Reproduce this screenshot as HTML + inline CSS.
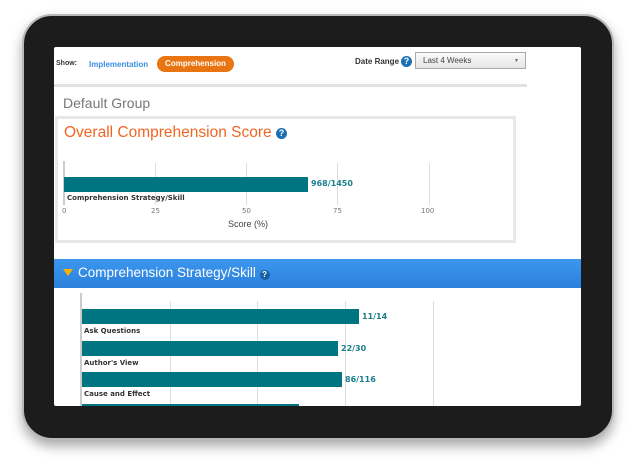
<!DOCTYPE html>
<html><head><style>
body{margin:0;width:642px;height:471px;background:#fff;position:relative;overflow:hidden;font-family:"Liberation Sans",sans-serif}
.a{position:absolute}
.frame{left:22px;top:14px;width:592px;height:426px;border-radius:30px;background:#1c1c1c;border:2px solid #b8b8b8;box-sizing:border-box;box-shadow:0 6px 12px rgba(0,0,0,.35)}
.screen{left:54px;top:47px;width:527px;height:359px;background:#fff;overflow:hidden;border-radius:2px}
.q{display:inline-block;width:11px;height:11px;border-radius:50%;background:#1a6fb0;color:#fff;font-size:9px;font-weight:bold;text-align:center;line-height:11px}
.g{background:#ddd;width:1px}
.bar{background:#007582}
.sm{font-size:7px;color:#333;font-weight:bold;font-family:"DejaVu Sans",sans-serif}
.val{font-size:8px;color:#1a7f8c;font-weight:bold;font-family:"DejaVu Sans",sans-serif}
.tk{font-size:7px;color:#777;font-family:"DejaVu Sans",sans-serif}
</style></head><body>
<div class="a frame"></div>
<div class="a screen">
 <div class="a" style="left:2px;top:13px;font-size:7px;font-weight:bold;color:#333">Show:</div>
 <div class="a" style="left:35px;top:13px;font-size:8px;font-weight:bold;color:#3a8fe0">Implementation</div>
 <div class="a" style="left:103px;top:9px;width:77px;height:16px;border-radius:8px;background:#e87511;color:#fff;font-size:8px;font-weight:bold;text-align:center;line-height:16px">Comprehension</div>
 <div class="a" style="left:301px;top:10px;font-size:8px;font-weight:bold;color:#333">Date Range</div>
 <div class="a q" style="left:347px;top:9px">?</div>
 <div class="a" style="left:361px;top:5px;width:111px;height:17px;border:1px solid #aaa;box-sizing:border-box;background:linear-gradient(#fafafa,#e6e6e6);font-size:8px;color:#444;padding:3px 0 0 7px">Last 4 Weeks<span style="position:absolute;right:6px;top:5px;font-size:5px;color:#666">▼</span></div>
 <div class="a" style="left:0;top:37px;width:473px;height:3px;background:#e2e2e2"></div>
 <div class="a" style="left:9px;top:48px;font-size:14px;color:#777">Default Group</div>
 <div class="a" style="left:1px;top:69px;width:461px;height:127px;border:3px solid #e8e8e8;box-sizing:border-box"></div>
 <div class="a" style="left:10px;top:77px;font-size:15.5px;color:#f26522">Overall Comprehension Score <span class="q" style="vertical-align:1px">?</span></div>
 <div class="a" style="left:9px;top:114px;width:2px;height:44px;background:#ccc"></div>
 <div class="a g" style="left:101px;top:116px;height:42px"></div>
 <div class="a g" style="left:192px;top:116px;height:42px"></div>
 <div class="a g" style="left:283px;top:116px;height:42px"></div>
 <div class="a g" style="left:375px;top:116px;height:42px"></div>
 <div class="a bar" style="left:10px;top:130px;width:244px;height:15px"></div>
 <div class="a val" style="left:257px;top:132px">968/1450</div>
 <div class="a sm" style="left:13px;top:147px">Comprehension Strategy/Skill</div>
 <div class="a tk" style="left:8px;top:160px">0</div>
 <div class="a tk" style="left:97px;top:160px">25</div>
 <div class="a tk" style="left:188px;top:160px">50</div>
 <div class="a tk" style="left:279px;top:160px">75</div>
 <div class="a tk" style="left:367px;top:160px">100</div>
 <div class="a" style="left:174px;top:172px;font-size:9px;color:#444">Score (%)</div>
 <div class="a" style="left:0;top:212px;width:527px;height:29px;background:linear-gradient(#3d97ee,#2a80dc)"></div>
 <div class="a" style="left:9px;top:222px;width:0;height:0;border-left:5px solid transparent;border-right:5px solid transparent;border-top:7px solid #f4b400"></div>
 <div class="a" style="left:24px;top:218px;font-size:13.5px;color:#fff">Comprehension Strategy/Skill <span class="q" style="width:10px;height:10px;line-height:10px;font-size:8px;background:#1a5fa0;vertical-align:0px">?</span></div>
 <div class="a" style="left:26px;top:246px;width:2px;height:120px;background:#ccc"></div>
 <div class="a g" style="left:116px;top:254px;height:110px"></div>
 <div class="a g" style="left:203px;top:254px;height:110px"></div>
 <div class="a g" style="left:291px;top:254px;height:110px"></div>
 <div class="a g" style="left:379px;top:254px;height:110px"></div>
 <div class="a bar" style="left:28px;top:262px;width:277px;height:15px"></div>
 <div class="a val" style="left:308px;top:265px">11/14</div>
 <div class="a sm" style="left:30px;top:280px">Ask Questions</div>
 <div class="a bar" style="left:28px;top:294px;width:256px;height:15px"></div>
 <div class="a val" style="left:287px;top:297px">22/30</div>
 <div class="a sm" style="left:30px;top:312px">Author's View</div>
 <div class="a bar" style="left:28px;top:325px;width:260px;height:15px"></div>
 <div class="a val" style="left:291px;top:328px">86/116</div>
 <div class="a sm" style="left:30px;top:343px">Cause and Effect</div>
 <div class="a bar" style="left:28px;top:357px;width:217px;height:15px"></div>
</div>
</body></html>
